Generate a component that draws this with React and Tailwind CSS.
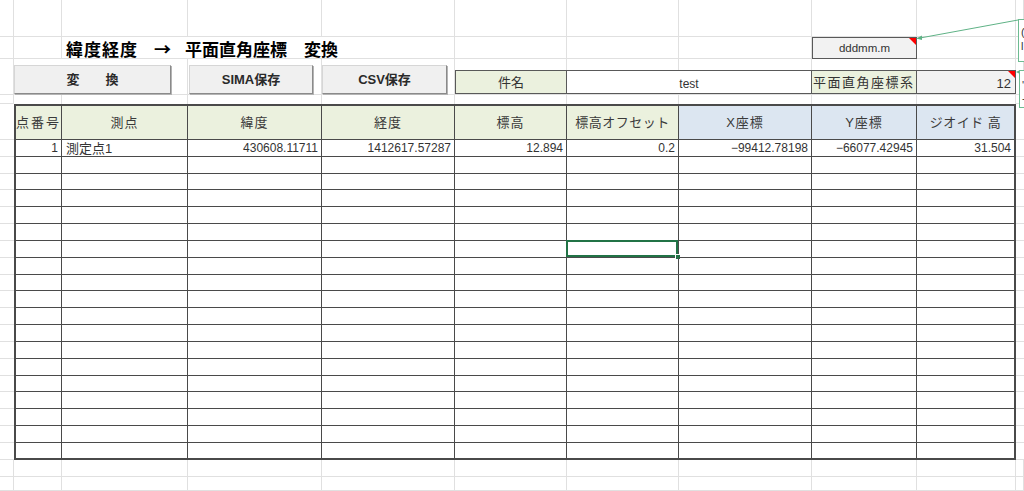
import React from 'react';

// sheet columns: 14 48 126 134 133 112 112 133 105 99 rest
const headers = [
  { label: '点番号', bg: 'bg-[#ebf1de]', track: 'tracking-[2px]' },
  { label: '測点', bg: 'bg-[#ebf1de]', track: 'tracking-[1px]' },
  { label: '緯度', bg: 'bg-[#ebf1de]', track: 'tracking-[1px]' },
  { label: '経度', bg: 'bg-[#ebf1de]', track: 'tracking-[1px]' },
  { label: '標高', bg: 'bg-[#ebf1de]', track: 'tracking-[1px]' },
  { label: '標高オフセット', bg: 'bg-[#ebf1de]', track: 'tracking-[0.5px]' },
  { label: 'X座標', bg: 'bg-[#dce6f1]', track: 'tracking-[1px]' },
  { label: 'Y座標', bg: 'bg-[#dce6f1]', track: 'tracking-[1px]' },
  { label: 'ジオイド 高', bg: 'bg-[#dce6f1]', track: 'tracking-[0.5px]' },
];

const firstRow = [
  '1',
  '測定点1',
  '430608.11711',
  '1412617.57287',
  '12.894',
  '0.2',
  '−99412.78198',
  '−66077.42945',
  '31.504',
];

const DATA_ROWS = 19;

const Gap = ({ className = '' }) => (
  <div className={`border-r border-b border-[#e0e0e0] ${className}`} />
);

const RedTick = () => (
  <div className="absolute top-0 right-0 w-0 h-0 border-l-[7px] border-l-transparent border-t-[7px] border-t-[#ff0000]" />
);

const SheetButton = ({ children, className = '' }) => (
  <div
    className={`h-[29px] flex items-center justify-center bg-[#f0f0f0] border border-[#d6d6d6] border-r-[#8a8a8a] border-b-[#8a8a8a] shadow-[1px_1px_0_#b4b4b4] text-[13px] font-bold text-[#2a2a2a] ${className}`}
  >
    {children}
  </div>
);

const cellEdges = (c, last) => {
  let cls = '';
  if (c === 0) cls += 'border-l-2 ';
  cls += c === 8 ? 'border-r-2 ' : 'border-r ';
  cls += last ? 'border-b-2' : 'border-b';
  return cls;
};

const App = () => {
  const rows = Array.from({ length: DATA_ROWS }, (_, i) => i);

  return (
    <div className="relative w-[1024px] h-[491px] overflow-hidden bg-white text-[#333] font-['Liberation_Sans','Noto_Sans_CJK_JP',sans-serif]">
      <div className="grid grid-cols-[14px_48px_126px_134px_133px_112px_112px_133px_105px_99px_1fr] grid-rows-[37px_22px_36px_9px_36px_repeat(19,16.84px)_17px_1fr] h-full">
        {/* row 1 */}
        {Array.from({ length: 11 }, (_, i) => (
          <Gap key={`r1-${i}`} />
        ))}

        {/* row 2: title + format cell */}
        <Gap />
        <Gap />
        <div className="col-span-3 border-r border-b border-[#e0e0e0] flex items-center pl-[4px] pt-[2px] text-[17px] font-bold text-black whitespace-nowrap font-['Noto_Sans_CJK_JP',sans-serif]">
          <span className="tracking-[1px]">緯度経度</span>
          <span className="ml-[16px]">→</span>
          <span className="ml-[14px]">平面直角座標</span>
          <span className="ml-[17px]">変換</span>
        </div>
        <Gap />
        <Gap />
        <Gap />
        <div className="relative bg-[#f2f2f2] border border-[#595959] flex items-center justify-center text-[11.5px] text-[#333] pt-[1px]">
          dddmm.m
          <RedTick />
        </div>
        <Gap />
        <Gap />

        {/* row 3: buttons + project box */}
        <Gap />
        <div className="col-span-2 border-r border-b border-[#e0e0e0] pt-[6px]">
          <SheetButton className="w-[157px]">変　　換</SheetButton>
        </div>
        <div className="border-r border-b border-[#e0e0e0] pt-[6px] pl-[1px]">
          <SheetButton className="w-[124px]">SIMA保存</SheetButton>
        </div>
        <div className="border-r border-b border-[#e0e0e0] pt-[6px]">
          <SheetButton className="w-[125px]">CSV保存</SheetButton>
        </div>
        <div className="flex flex-col border-b border-[#e0e0e0]">
          <div className="h-[11px] border-r border-[#e0e0e0]" />
          <div className="h-[24px] border border-[#595959] bg-[#ebf1de] flex items-center justify-center text-[13px] pt-[2px]">
            件名
          </div>
        </div>
        <div className="col-span-2 flex flex-col border-b border-[#e0e0e0]">
          <div className="h-[11px] flex">
            <div className="w-[112px] border-r border-[#e0e0e0]" />
            <div className="flex-1 border-r border-[#e0e0e0]" />
          </div>
          <div className="h-[24px] border-t border-b border-r border-[#595959] flex items-center justify-center text-[12px] pt-[3px]">
            test
          </div>
        </div>
        <div className="flex flex-col border-b border-[#e0e0e0]">
          <div className="h-[11px] border-r border-[#e0e0e0]" />
          <div className="h-[24px] border-t border-b border-r border-[#595959] bg-[#ebf1de] flex items-center text-[13px] tracking-[1.5px] pl-[1px] pt-[2px] whitespace-nowrap overflow-hidden">
            平面直角座標系
          </div>
        </div>
        <div className="flex flex-col border-b border-[#e0e0e0]">
          <div className="h-[11px] border-r border-[#e0e0e0]" />
          <div className="relative h-[24px] border-t border-b border-r border-[#595959] bg-[#f2f2f2] flex items-end justify-end text-[13px] pr-[4px] leading-[18px]">
            12
            <RedTick />
          </div>
        </div>
        <Gap />

        {/* row 4: spacer above table */}
        <Gap />
        {Array.from({ length: 9 }, (_, i) => (
          <div key={`r4-${i}`} className="border-r border-[#e0e0e0]" />
        ))}
        <Gap />

        {/* header row */}
        <div className="border-b border-[#e0e0e0]" />
        {headers.map((h, c) => (
          <div
            key={h.label}
            className={`border-t-2 ${cellEdges(c, false)} border-[#4a4a4a] ${h.bg} flex items-center justify-center text-[13px] text-[#3a3a3a] whitespace-nowrap ${h.track}`}
          >
            {h.label}
          </div>
        ))}
        <div className="border-b border-[#e0e0e0]" />

        {/* data rows */}
        {rows.map((r) => (
          <React.Fragment key={`row-${r}`}>
            <div className="border-b border-[#e0e0e0]" />
            {headers.map((h, c) => {
              const last = r === DATA_ROWS - 1;
              const value = r === 0 ? firstRow[c] : '';
              const selected = r === 6 && c === 5;
              return (
                <div
                  key={`d-${r}-${c}`}
                  className={`relative ${cellEdges(c, last)} border-[#4a4a4a] flex items-end leading-[15px] whitespace-nowrap ${
                    c === 1 ? 'justify-start pl-[4px] text-[13px]' : 'justify-end pr-[3px] text-[12px]'
                  }`}
                >
                  {value}
                  {selected && (
                    <>
                      <div className="absolute left-[-1px] top-[-1px] right-0 bottom-0 border-2 border-[#217346]" />
                      <div className="absolute right-[-3px] bottom-[-3px] w-[6px] h-[6px] bg-[#217346] border border-white" />
                    </>
                  )}
                </div>
              );
            })}
            <div className="border-b border-[#e0e0e0]" />
          </React.Fragment>
        ))}

        {/* rows below table */}
        {Array.from({ length: 22 }, (_, i) => (
          <Gap key={`b-${i}`} />
        ))}
      </div>

      {/* cell comments, cut off by the window edge */}
      <svg className="absolute inset-0 pointer-events-none" width="1024" height="491">
        <line x1="1018" y1="20" x2="920" y2="38" stroke="#5fb286" strokeWidth="1" />
        <polygon points="916,38.5 922,35.5 922,40" fill="#5fb286" />
        <polygon points="1016,72 1020,70 1020,74" fill="#5fb286" />
      </svg>
      <div className="absolute left-[1018px] top-[19px] w-[30px] h-[43px] border border-[#6dbb91] bg-white text-[11px] text-[#333] leading-[14px] pl-[2px] pt-[5px]">
        <div>(</div>
        <div>l</div>
      </div>
      <div className="absolute left-[1019px] top-[70px] w-[30px] h-[38px] border border-[#6dbb91] bg-white text-[11px] text-[#333] leading-[13px] pl-[2px] pt-[8px]">
        <div>'</div>
        <div>-</div>
      </div>
    </div>
  );
};

export default App;
